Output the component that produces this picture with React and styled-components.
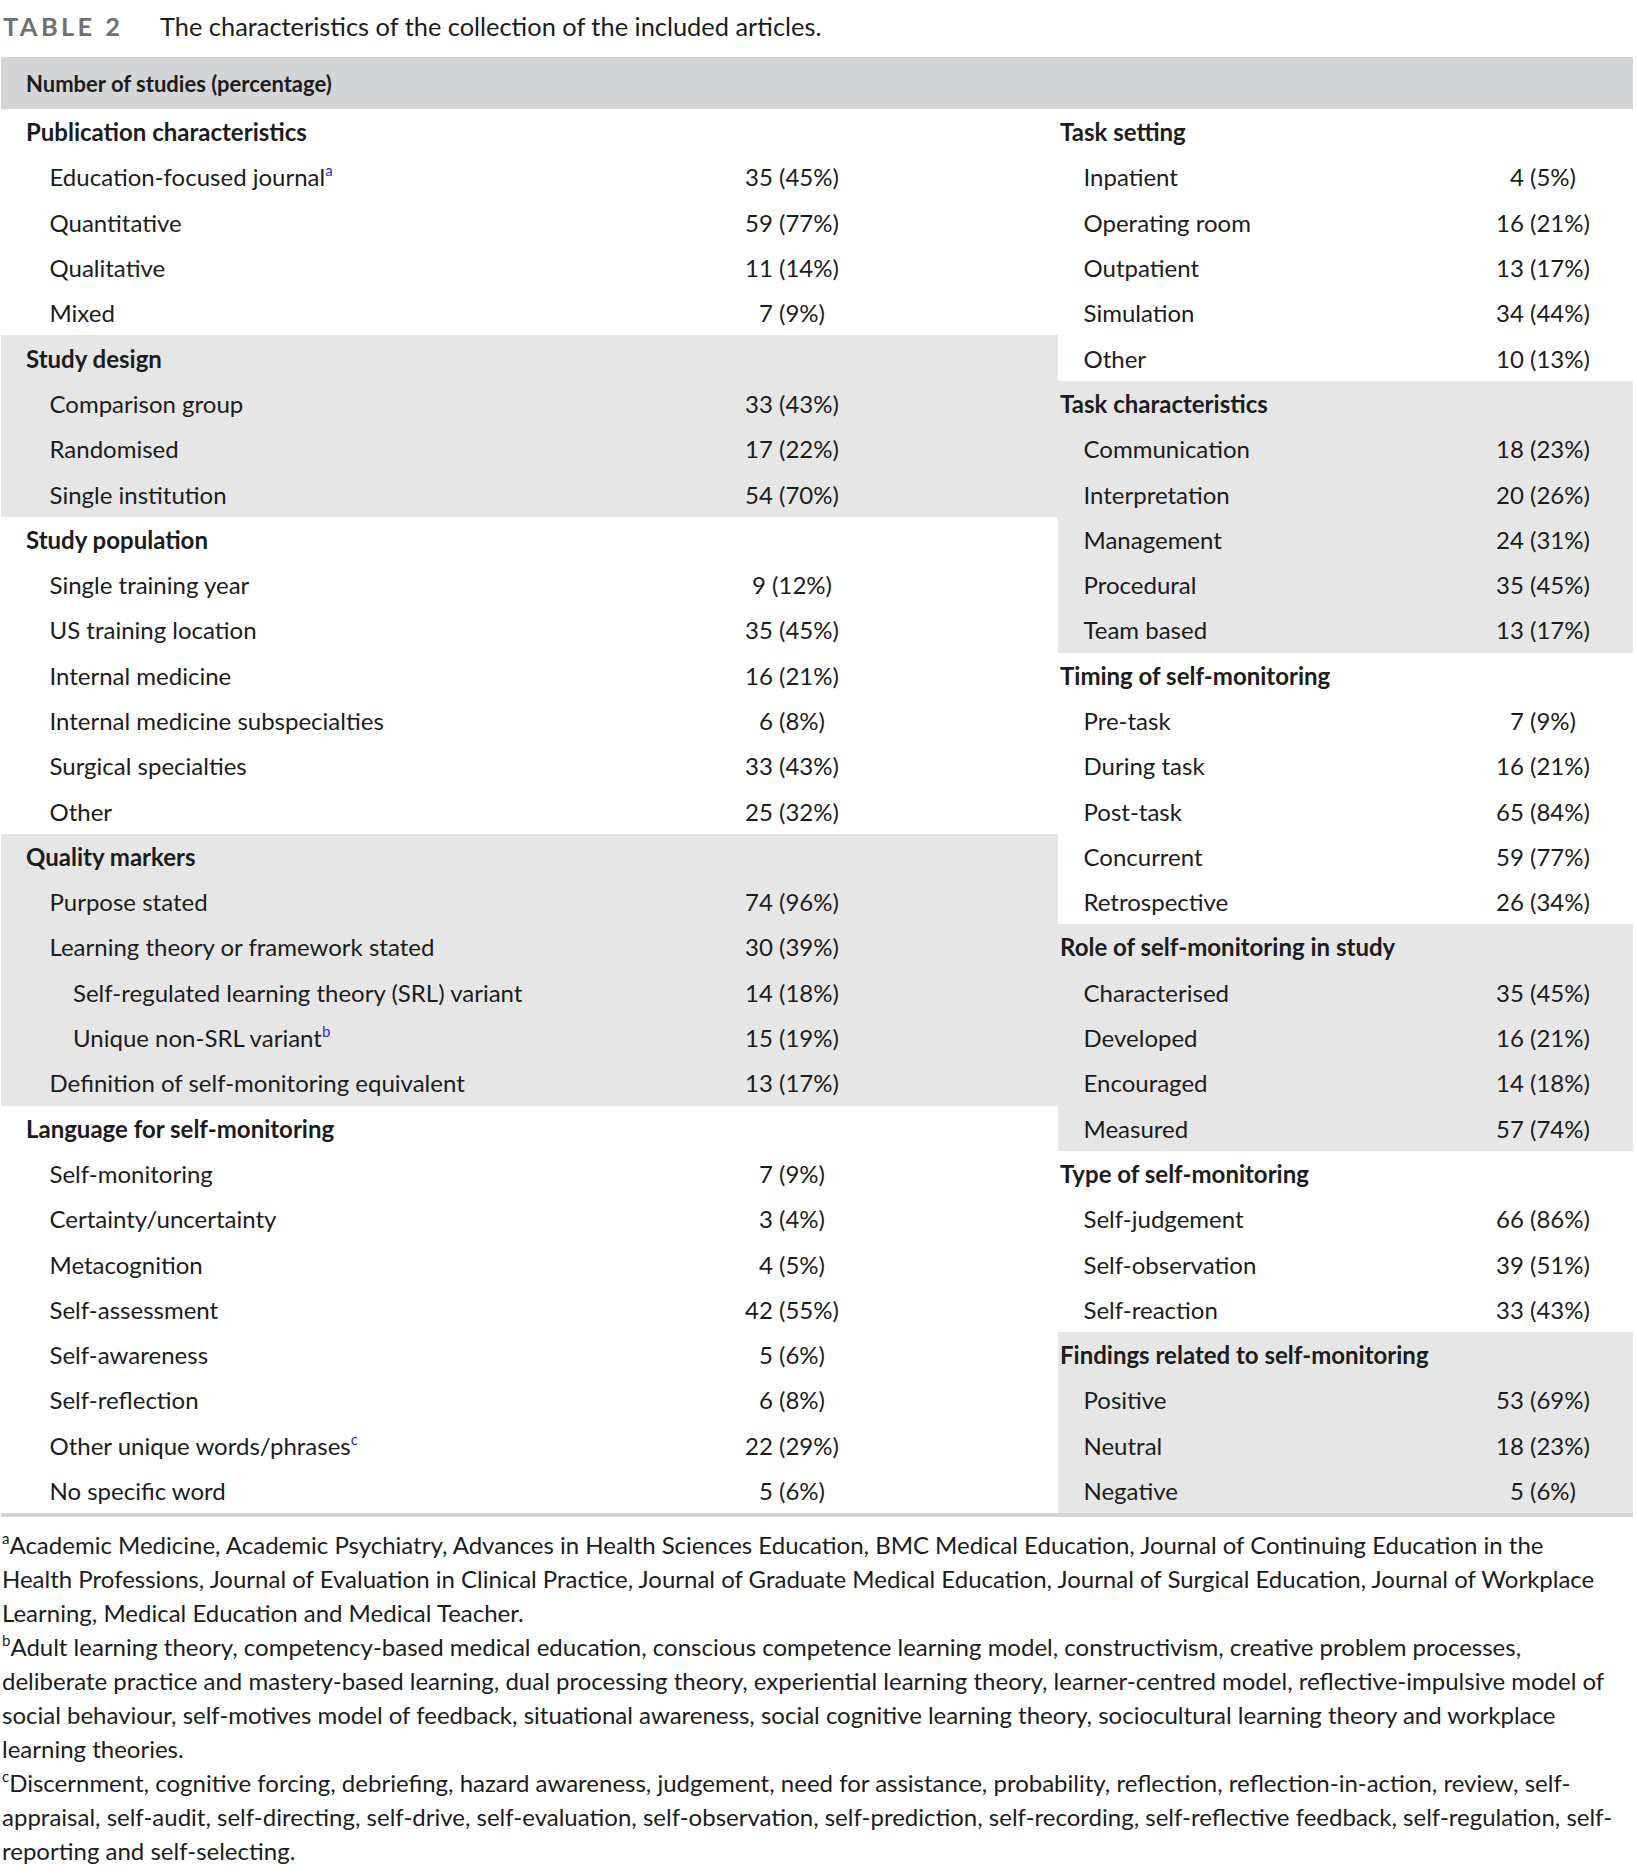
import React from "react";
import styled, { createGlobalStyle } from "styled-components";

const GlobalStyle = createGlobalStyle`
  body {
    margin: 0;
    background: #fff;
    font-family: Lato, "Open Sans", sans-serif;
    color: #1c1c1c;
  }
`;

const Page = styled.div`
  width: 1637px;
  padding-left: 1px;
  box-sizing: border-box;
`;

const Caption = styled.div`
  height: 57px;
  display: flex;
  align-items: center;
  padding-bottom: 6px;
  box-sizing: border-box;
  font-size: 25.4px;
`;

const Label = styled.span`
  font-weight: 700;
  letter-spacing: 3.4px;
  color: #707070;
  margin-left: 2px;
  width: 157px;
`;

const HeaderBand = styled.div`
  width: 1632px;
  height: 52px;
  background: #d4d5d7;
  display: flex;
  align-items: center;
  padding-left: 25px;
  box-sizing: border-box;
  font-size: 22px;
  font-weight: 700;
`;

const Body = styled.div`
  display: grid;
  grid-template-columns: 1057px 575px;
  border-bottom: 4px solid #d4d4d4;
  width: 1632px;
`;

const Half = styled.div`
  display: flex;
  flex-direction: column;
`;

const Group = styled.div`
  background: ${(p) => (p.$shaded ? "#e6e6e6" : "transparent")};
`;

const Row = styled.div`
  display: grid;
  grid-template-columns: 1fr ${(p) => p.$valueWidth}px;
  height: 45.3px;
  align-items: center;
  font-size: 24px;
`;

const Name = styled.div`
  padding-left: ${(p) => p.$base + p.$level * 23.5}px;
  font-weight: ${(p) => (p.$head ? 700 : 400)};
  white-space: nowrap;
`;

const Value = styled.div`
  text-align: center;
  white-space: nowrap;
`;

const Sup = styled.span`
  display: inline-block;
  font-size: 15px;
  line-height: 1;
  vertical-align: top;
  margin-top: ${(p) => (p.$link ? "1px" : "3px")};
  color: ${(p) => (p.$link ? "#2b2bf0" : "inherit")};
`;

const Notes = styled.div`
  padding-top: 11px;
  width: 1614px;
  font-size: 24px;
  line-height: 34px;
  padding-left: 1px;
`;

const Note = styled.p`
  margin: 0;
`;

const left = [
  {
    title: "Publication characteristics",
    items: [
      ["Education-focused journal", "35 (45%)", 1, "a"],
      ["Quantitative", "59 (77%)", 1],
      ["Qualitative", "11 (14%)", 1],
      ["Mixed", "7 (9%)", 1],
    ],
  },
  {
    title: "Study design",
    items: [
      ["Comparison group", "33 (43%)", 1],
      ["Randomised", "17 (22%)", 1],
      ["Single institution", "54 (70%)", 1],
    ],
  },
  {
    title: "Study population",
    items: [
      ["Single training year", "9 (12%)", 1],
      ["US training location", "35 (45%)", 1],
      ["Internal medicine", "16 (21%)", 1],
      ["Internal medicine subspecialties", "6 (8%)", 1],
      ["Surgical specialties", "33 (43%)", 1],
      ["Other", "25 (32%)", 1],
    ],
  },
  {
    title: "Quality markers",
    items: [
      ["Purpose stated", "74 (96%)", 1],
      ["Learning theory or framework stated", "30 (39%)", 1],
      ["Self-regulated learning theory (SRL) variant", "14 (18%)", 2],
      ["Unique non-SRL variant", "15 (19%)", 2, "b"],
      ["Definition of self-monitoring equivalent", "13 (17%)", 1],
    ],
  },
  {
    title: "Language for self-monitoring",
    items: [
      ["Self-monitoring", "7 (9%)", 1],
      ["Certainty/uncertainty", "3 (4%)", 1],
      ["Metacognition", "4 (5%)", 1],
      ["Self-assessment", "42 (55%)", 1],
      ["Self-awareness", "5 (6%)", 1],
      ["Self-reflection", "6 (8%)", 1],
      ["Other unique words/phrases", "22 (29%)", 1, "c"],
      ["No specific word", "5 (6%)", 1],
    ],
  },
];

const right = [
  {
    title: "Task setting",
    items: [
      ["Inpatient", "4 (5%)", 1],
      ["Operating room", "16 (21%)", 1],
      ["Outpatient", "13 (17%)", 1],
      ["Simulation", "34 (44%)", 1],
      ["Other", "10 (13%)", 1],
    ],
  },
  {
    title: "Task characteristics",
    items: [
      ["Communication", "18 (23%)", 1],
      ["Interpretation", "20 (26%)", 1],
      ["Management", "24 (31%)", 1],
      ["Procedural", "35 (45%)", 1],
      ["Team based", "13 (17%)", 1],
    ],
  },
  {
    title: "Timing of self-monitoring",
    items: [
      ["Pre-task", "7 (9%)", 1],
      ["During task", "16 (21%)", 1],
      ["Post-task", "65 (84%)", 1],
      ["Concurrent", "59 (77%)", 1],
      ["Retrospective", "26 (34%)", 1],
    ],
  },
  {
    title: "Role of self-monitoring in study",
    items: [
      ["Characterised", "35 (45%)", 1],
      ["Developed", "16 (21%)", 1],
      ["Encouraged", "14 (18%)", 1],
      ["Measured", "57 (74%)", 1],
    ],
  },
  {
    title: "Type of self-monitoring",
    items: [
      ["Self-judgement", "66 (86%)", 1],
      ["Self-observation", "39 (51%)", 1],
      ["Self-reaction", "33 (43%)", 1],
    ],
  },
  {
    title: "Findings related to self-monitoring",
    items: [
      ["Positive", "53 (69%)", 1],
      ["Neutral", "18 (23%)", 1],
      ["Negative", "5 (6%)", 1],
    ],
  },
];

function Column({ groups, valueWidth, base }) {
  return (
    <Half>
      {groups.map((g, i) => (
        <Group key={g.title} $shaded={i % 2 === 1}>
          <Row $valueWidth={valueWidth}>
            <Name $base={base} $level={0} $head>
              {g.title}
            </Name>
            <Value />
          </Row>
          {g.items.map(([name, value, level, note]) => (
            <Row key={name} $valueWidth={valueWidth}>
              <Name $base={base} $level={level}>
                {name}
                {note && <Sup $link>{note}</Sup>}
              </Name>
              <Value>{value}</Value>
            </Row>
          ))}
        </Group>
      ))}
    </Half>
  );
}

export default function App() {
  return (
    <Page>
      <GlobalStyle />
      <Caption>
        <Label>TABLE 2</Label>
        The characteristics of the collection of the included articles.
      </Caption>
      <HeaderBand>Number of studies (percentage)</HeaderBand>
      <Body>
        <Column groups={left} valueWidth={532} base={25} />
        <Column groups={right} valueWidth={180} base={2} />
      </Body>
      <Notes>
        <Note>
          <Sup>a</Sup>Academic Medicine, Academic Psychiatry, Advances in
          Health Sciences Education, BMC Medical Education, Journal of
          Continuing Education in the Health Professions, Journal of
          Evaluation in Clinical Practice, Journal of Graduate Medical
          Education, Journal of Surgical Education, Journal of Workplace
          Learning, Medical Education and Medical Teacher.
        </Note>
        <Note>
          <Sup>b</Sup>Adult learning theory, competency-based medical
          education, conscious competence learning model, constructivism,
          creative problem processes, deliberate practice and mastery-based
          learning, dual processing theory, experiential learning theory,
          learner-centred model, reflective-impulsive model of social
          behaviour, self-motives model of feedback, situational awareness,
          social cognitive learning theory, sociocultural learning theory and
          workplace learning theories.
        </Note>
        <Note>
          <Sup>c</Sup>Discernment, cognitive forcing, debriefing, hazard
          awareness, judgement, need for assistance, probability, reflection,
          reflection-in-action, review, self-appraisal, self-audit,
          self-directing, self-drive, self-evaluation, self-observation,
          self-prediction, self-recording, self-reflective feedback,
          self-regulation, self-reporting and self-selecting.
        </Note>
      </Notes>
    </Page>
  );
}
